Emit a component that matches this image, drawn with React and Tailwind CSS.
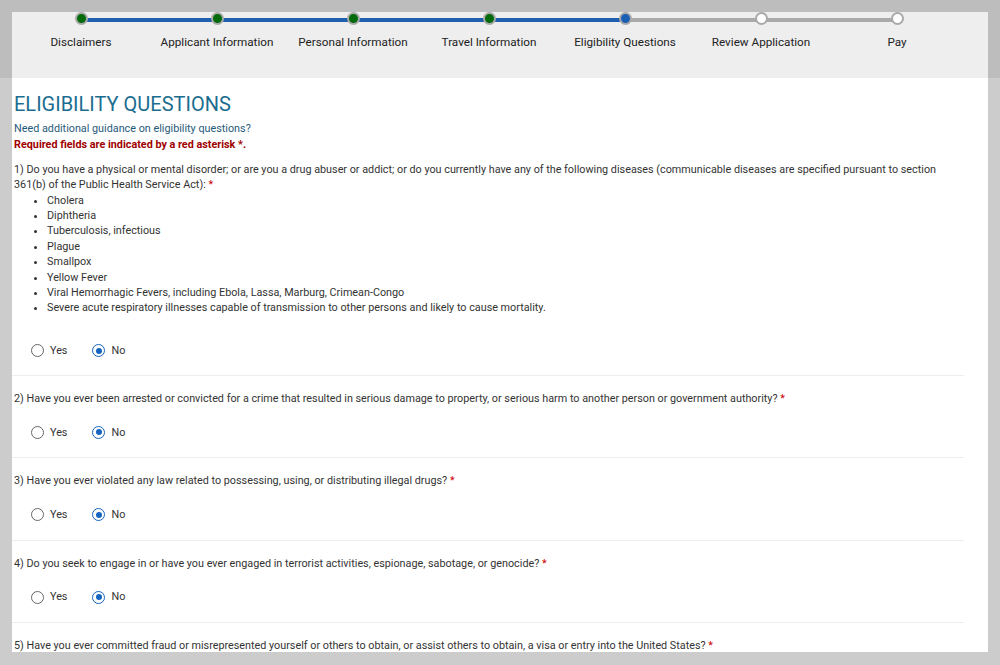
import { useState } from 'react'

const STEPS = [
  { label: 'Disclaimers', state: 'done' },
  { label: 'Applicant Information', state: 'done' },
  { label: 'Personal Information', state: 'done' },
  { label: 'Travel Information', state: 'done' },
  { label: 'Eligibility Questions', state: 'current' },
  { label: 'Review Application', state: 'todo' },
  { label: 'Pay', state: 'todo' },
]

const DISEASES = [
  'Cholera',
  'Diphtheria',
  'Tuberculosis, infectious',
  'Plague',
  'Smallpox',
  'Yellow Fever',
  'Viral Hemorrhagic Fevers, including Ebola, Lassa, Marburg, Crimean-Congo',
  'Severe acute respiratory illnesses capable of transmission to other persons and likely to cause mortality.',
]

const QUESTIONS = [
  'Have you ever been arrested or convicted for a crime that resulted in serious damage to property, or serious harm to another person or government authority?',
  'Have you ever violated any law related to possessing, using, or distributing illegal drugs?',
  'Do you seek to engage in or have you ever engaged in terrorist activities, espionage, sabotage, or genocide?',
  'Have you ever committed fraud or misrepresented yourself or others to obtain, or assist others to obtain, a visa or entry into the United States?',
]

function Stepper() {
  return (
    <div className="relative w-[952px] ml-px">
      {/* track */}
      <div className="absolute left-[68px] right-[68px] top-[6px] h-[4px] bg-[#aaaaaa]" />
      <div className="absolute left-[68px] w-[543px] top-[6px] h-[4px] bg-[#1f5fae]" />
      <div className="relative grid grid-cols-7">
        {STEPS.map(s => (
          <div key={s.label} className="flex flex-col items-center">
            <span
              className={
                'block w-[13px] h-[13px] rounded-full border-[2px] border-[#a9a9a9] ' +
                (s.state === 'done' ? 'bg-[#006b0b]' : s.state === 'current' ? 'bg-[#1a5fb4]' : 'bg-white')
              }
            />
            <span className="mt-[9px] text-[11.7px] leading-[16px] text-[#222]">{s.label}</span>
          </div>
        ))}
      </div>
    </div>
  )
}

function Radio({ checked, label, onClick }) {
  return (
    <label className="flex items-center gap-[6px] cursor-pointer" onClick={onClick}>
      <span
        className={
          'flex items-center justify-center w-[13px] h-[13px] rounded-full border-[1.5px] ' +
          (checked ? 'border-[#1565c0]' : 'border-[#666]')
        }
      >
        {checked && <span className="block w-[6px] h-[6px] rounded-full bg-[#1565c0]" />}
      </span>
      <span className="text-[10.8px] text-[#333]">{label}</span>
    </label>
  )
}

function Answer({ value, onChange }) {
  return (
    <div className="mt-4 h-5 pl-[17px] flex items-center gap-[25px]">
      <Radio label="Yes" checked={value === 'yes'} onClick={() => onChange('yes')} />
      <Radio label="No" checked={value === 'no'} onClick={() => onChange('no')} />
    </div>
  )
}

function Req() {
  return <span className="text-[#cc0000]">*</span>
}

export default function App() {
  const [answers, setAnswers] = useState(['no', 'no', 'no', 'no', 'no'])
  const setAt = i => v => setAnswers(a => a.map((x, j) => (j === i ? v : x)))

  return (
    <div
      className="h-[665px] overflow-hidden bg-[linear-gradient(to_bottom,#bdbdbd_78px,#cccccc_78px)] pt-3 pl-3 pr-3"
      style={{ fontFamily: 'Roboto, "Liberation Sans", sans-serif' }}
    >
      <div className="w-[976px] h-[640px] bg-white overflow-hidden text-[10.8px] leading-[15.4px] text-[#333]">
        <div className="h-[66px] bg-[#eeeeee]">
          <Stepper />
        </div>

        <div className="w-[952px]">
          <div className="px-[2px]">
            <h1 className="mt-[14px] text-[20px] leading-[24px] text-[#1b6d8f]">ELIGIBILITY QUESTIONS</h1>
            <p className="mt-[5px] text-[#1f5a7a]">Need additional guidance on eligibility questions?</p>
            <p className="mt-px font-bold text-[#a00000]">Required fields are indicated by a red asterisk *.</p>
          </div>

          <div className="pt-[9px] pb-[14px] px-[2px]">
            <p>
              1) Do you have a physical or mental disorder; or are you a drug abuser or addict; or do you currently have any of the following diseases (communicable diseases are specified pursuant to section
              <br />
              361(b) of the Public Health Service Act): <Req />
            </p>
            <ul className="list-disc pl-[33px] mb-[25px]">
              {DISEASES.map(d => (
                <li key={d}>{d}</li>
              ))}
            </ul>
            <Answer value={answers[0]} onChange={setAt(0)} />
          </div>

          {QUESTIONS.map((q, i) => (
            <div key={i} className="border-t border-[#eeeeee] pt-[15px] pb-[15px] px-[2px]">
              <p>
                {i + 2}) {q} <Req />
              </p>
              <Answer value={answers[i + 1]} onChange={setAt(i + 1)} />
            </div>
          ))}
        </div>
      </div>
    </div>
  )
}
